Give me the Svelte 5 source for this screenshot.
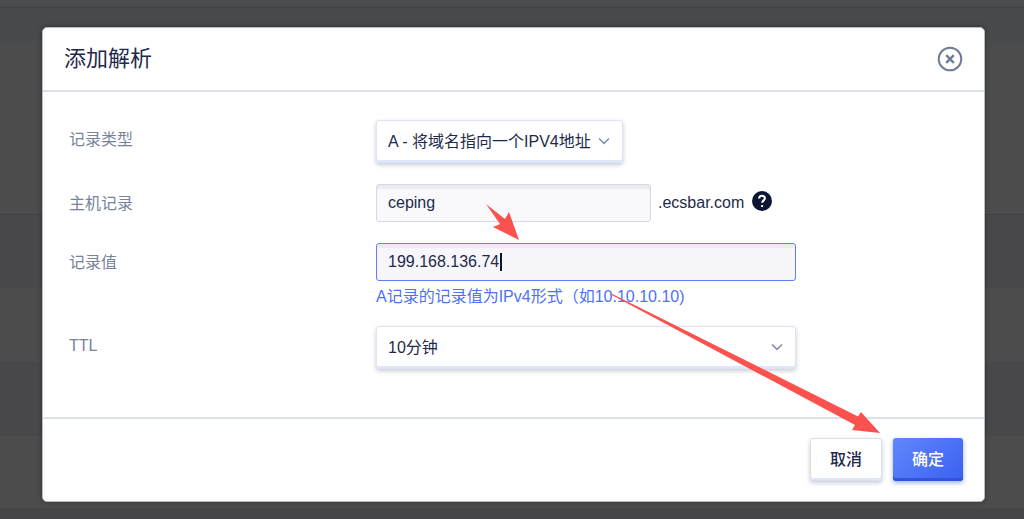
<script>
  const recordTypes = [{ value: "A", label: "A - 将域名指向一个IPV4地址" }];
  const ttls = [{ value: 600, label: "10分钟" }];

  let type = $state("A");
  let host = $state("ceping");
  let value = $state("199.168.136.74");
  let ttl = $state(600);
</script>

{#snippet chevron()}
  <svg class="chevron" viewBox="0 0 12 8" aria-hidden="true">
    <path d="M1 1.5 6 6.3 11 1.5" />
  </svg>
{/snippet}

<div class="backdrop">
  <form class="dialog" onsubmit={(e) => e.preventDefault()}>
    <header>
      <h1>添加解析</h1>
      <button class="close" type="button" aria-label="关闭">
        <svg viewBox="0 0 26 26">
          <circle cx="13" cy="13" r="11.3" />
          <path class="cross" d="M9.2 9.2 16.8 16.8M16.8 9.2 9.2 16.8" />
        </svg>
      </button>
    </header>

    <div class="fields">
      <div class="row tall">
        <label for="type">记录类型</label>
        <div class="select fit">
          <select id="type" bind:value={type}>
            {#each recordTypes as t}
              <option value={t.value}>{t.label}</option>
            {/each}
          </select>
          {@render chevron()}
        </div>
      </div>

      <div class="row">
        <label for="host">主机记录</label>
        <div class="host">
          <input id="host" type="text" bind:value={host} />
          <span class="domain">.ecsbar.com</span>
          <svg class="help" viewBox="0 0 20 20" aria-hidden="true">
            <circle cx="10" cy="10" r="10" />
            <path d="M7.1 7.6C7.1 5.6 8.3 4.7 10 4.7s2.9 1 2.9 2.6c0 2-2.7 2.2-2.7 4.5" />
            <path d="M10.1 14.1v1.9" />
          </svg>
        </div>
      </div>

      <div class="row">
        <label for="value">记录值</label>
        <div class="value">
          <input id="value" class="active" type="text" bind:value />
          <span class="caret"></span>
        </div>
        <p class="hint">A记录的记录值为IPv4形式（如10.10.10.10)</p>
      </div>

      <div class="row tall">
        <label for="ttl">TTL</label>
        <div class="select">
          <select id="ttl" bind:value={ttl}>
            {#each ttls as t}
              <option value={t.value}>{t.label}</option>
            {/each}
          </select>
          {@render chevron()}
        </div>
      </div>
    </div>

    <footer>
      <button class="btn" type="button">取消</button>
      <button class="btn primary" type="submit">确定</button>
    </footer>

    <svg class="arrows" viewBox="0 0 400 240" aria-hidden="true">
      <path d="M6 4 25 19 29 12 39 40 13 27 20 24Z" />
      <path d="M131.4 93.4 378 216.5 381 212 400 233 372 230 375 225 130.8 94.6Z" />
    </svg>
  </form>
</div>

<style>
  :global(body) {
    margin: 0;
  }

  .backdrop {
    box-sizing: border-box;
    min-height: 100vh;
    padding: 27px 39px 17px 42px;
    font-family: "Liberation Sans", "Noto Sans CJK SC", sans-serif;
    font-size: 16px;
    color: #1f2a4a;
    /* dimmed table rows behind the dialog */
    background: linear-gradient(
      #4c4c4c 7px,
      #424345 7px 8px,
      #48494b 8px 41px,
      #4c4c4c 41px 214px,
      #414244 214px 215px,
      #48484a 215px 288px,
      #4c4c4c 288px 361px,
      #48484a 361px 436px,
      #4c4c4c 436px 508px,
      #464648 508px
    );
  }

  .dialog {
    position: relative;
    box-sizing: border-box;
    background: #fff;
    border: 1px solid #b4bbcb;
    border-radius: 5px;
    box-shadow: 0 0 5px rgba(0, 0, 0, 0.35);
  }

  header {
    display: flex;
    align-items: center;
    justify-content: space-between;
    height: 62px;
    padding: 0 21px;
    border-bottom: 2px solid #dbe0ec;
  }

  h1 {
    margin: 0;
    font-size: 22px;
    font-weight: 400;
    line-height: 32px;
  }

  .close {
    width: 26px;
    height: 26px;
    padding: 0;
    border: 0;
    background: none;
    cursor: pointer;
  }

  .close svg {
    display: block;
    fill: none;
    stroke: #6e7d96;
    stroke-width: 2;
  }

  .close .cross {
    stroke-width: 2.4;
  }

  .fields {
    display: flex;
    flex-direction: column;
    gap: 21px;
    padding: 28px 26px 48px;
  }

  .row {
    display: grid;
    grid-template-columns: 307px minmax(0, 420px);
    align-items: center;
  }

  label {
    padding-top: 2px;
    line-height: 36px;
    color: #77849b;
  }

  .tall label {
    padding: 0 0 4px;
  }

  input,
  select {
    box-sizing: border-box;
    display: block;
    width: 100%;
    margin: 0;
    padding: 0 11px;
    border: 1px solid #d3d9e8;
    border-radius: 3px;
    outline: 0;
    font: inherit;
    color: inherit;
  }

  input {
    height: 38px;
    background: #f9f9fc;
    box-shadow: inset 0 4px 1px #ececef;
  }

  input.active {
    border-color: #5f80f5;
    background: #f6f6fb;
  }

  select {
    appearance: none;
    height: 43px;
    background: #fff;
    border-color: #dfe4f5;
    box-shadow:
      inset 0 -2px 0 #e0e6fa,
      0 2px 4px rgba(40, 50, 90, 0.25);
  }

  .select {
    position: relative;
  }

  .fit {
    justify-self: start;
  }

  .fit select {
    padding-right: 30px;
  }

  .chevron {
    position: absolute;
    top: 17px;
    right: 13px;
    width: 12px;
    height: 8px;
    fill: none;
    stroke: #8290a6;
    stroke-width: 1.6;
    pointer-events: none;
  }

  .host {
    display: flex;
    align-items: center;
  }

  .host input {
    flex: 0 1 275px;
    min-width: 0;
  }

  .domain {
    margin: 0 8px 0 7px;
  }

  .help {
    flex: none;
    width: 20px;
    height: 20px;
    margin-bottom: 4px;
    fill: #0c1633;
  }

  .help path {
    fill: none;
    stroke: #fff;
    stroke-width: 2;
  }

  .value {
    position: relative;
  }

  .caret {
    position: absolute;
    top: 10px;
    left: 124px;
    width: 2px;
    height: 18px;
    background: #0c1633;
  }

  .hint {
    grid-column: 2;
    margin: 4px 0 0;
    line-height: 24px;
    margin-bottom: -4px;
    white-space: nowrap;
    color: #4e71f5;
  }

  footer {
    display: flex;
    justify-content: flex-end;
    gap: 11px;
    padding: 19px 21px 20px;
    border-top: 2px solid #dbe0ec;
  }

  .btn {
    width: 72px;
    height: 43px;
    padding: 0 0 4px;
    border: 1px solid #dadfee;
    border-radius: 3px;
    background: #fff;
    box-shadow:
      inset 0 -2px 0 #e0e6fa,
      0 2px 4px rgba(40, 50, 90, 0.25);
    font: inherit;
    font-weight: 500;
    color: inherit;
    cursor: pointer;
  }

  .btn.primary {
    width: 70px;
    border: 0;
    background: linear-gradient(135deg, #6187fb, #3a60f2);
    box-shadow:
      inset 0 -3px 0 #3354d6,
      0 2px 4px rgba(58, 96, 242, 0.5);
    color: #fff;
  }

  /* callout arrows pointing at the value field and the submit button */
  .arrows {
    position: absolute;
    top: 172px;
    left: 437px;
    width: 400px;
    height: 240px;
    fill: #fb5250;
    pointer-events: none;
  }
</style>
